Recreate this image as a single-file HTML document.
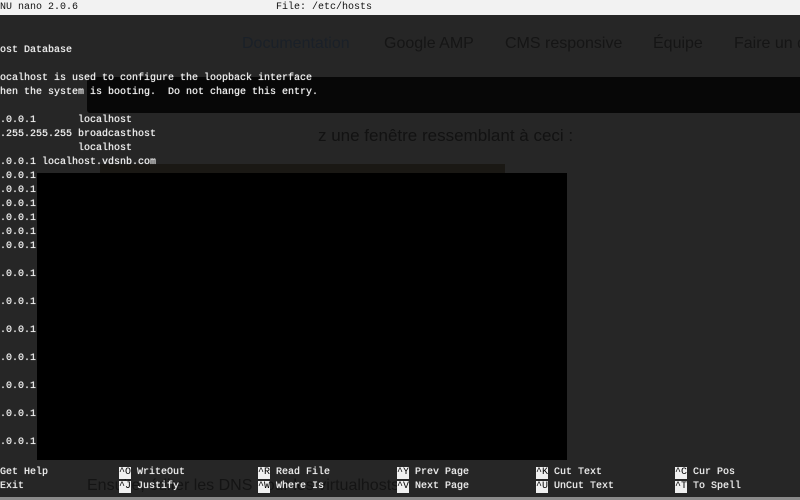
<!DOCTYPE html>
<html><head><meta charset="utf-8"><style>
html,body{margin:0;padding:0}
body{width:800px;height:500px;overflow:hidden;background:#262626;position:relative;font-family:"Liberation Mono",monospace;}
.t{position:absolute;font-size:10px;line-height:14px;color:#f0f0f0;white-space:pre;text-shadow:0 0 0.6px #fff;}
.w{position:absolute;font-family:"Liberation Sans",sans-serif;white-space:pre;}
.k{position:absolute;font-size:10px;line-height:12px;background:#f0f0f0;color:#000;white-space:pre;}
</style></head><body>
<div style="position:absolute;left:0;top:0;width:800px;height:15px;background:#f2f2f2"></div>
<div class="t" style="left:-6px;top:1px;color:#111;text-shadow:none">GNU nano 2.0.6</div>
<div class="t" style="left:276px;top:1px;color:#111;text-shadow:none">File: /etc/hosts</div>

<div class="w" style="left:242px;top:35px;font-size:16px;color:#1a2028">Documentation</div>
<div class="w" style="left:384px;top:35px;font-size:16px;color:#151515">Google AMP</div>
<div class="w" style="left:505px;top:35px;font-size:16px;color:#151515">CMS responsive</div>
<div class="w" style="left:653px;top:35px;font-size:16px;color:#151515">Équipe</div>
<div class="w" style="left:734px;top:35px;font-size:16px;color:#151515">Faire un don</div>

<div style="position:absolute;left:87px;top:77px;width:713px;height:36px;background:#070707;border-radius:3px 0 0 3px"></div>
<div class="w" style="left:318px;top:126px;font-size:17px;color:#121212">z une fenêtre ressemblant à ceci :</div>
<div style="position:absolute;left:100px;top:164px;width:405px;height:9px;background:#1a1814"></div>

<div style="position:absolute;left:37px;top:173px;width:530px;height:287px;background:#000"></div>

<div class="t" style="left:-6px;top:44px">Host Database</div>
<div class="t" style="left:-6px;top:72px">localhost is used to configure the loopback interface</div>
<div class="t" style="left:-6px;top:86px">when the system is booting.  Do not change this entry.</div>
<div class="t" style="left:-18px;top:114px">127.0.0.1       localhost</div>
<div class="t" style="left:-18px;top:128px">255.255.255.255 broadcasthost</div>
<div class="t" style="left:78px;top:142px">localhost</div>
<div class="t" style="left:-18px;top:156px">127.0.0.1 localhost.vdsnb.com</div>
<div class="t" style="left:-18px;top:170px">127.0.0.1</div>
<div class="t" style="left:-18px;top:184px">127.0.0.1</div>
<div class="t" style="left:-18px;top:198px">127.0.0.1</div>
<div class="t" style="left:-18px;top:212px">127.0.0.1</div>
<div class="t" style="left:-18px;top:226px">127.0.0.1</div>
<div class="t" style="left:-18px;top:240px">127.0.0.1</div>
<div class="t" style="left:-18px;top:268px">127.0.0.1</div>
<div class="t" style="left:-18px;top:296px">127.0.0.1</div>
<div class="t" style="left:-18px;top:324px">127.0.0.1</div>
<div class="t" style="left:-18px;top:352px">127.0.0.1</div>
<div class="t" style="left:-18px;top:380px">127.0.0.1</div>
<div class="t" style="left:-18px;top:408px">127.0.0.1</div>
<div class="t" style="left:-18px;top:436px">127.0.0.1</div>

<div class="w" style="left:87px;top:477px;font-size:16px;color:#141414">Ensuite, éditer les DNS pour les virtualhosts</div>

<div class="t" style="left:0px;top:466px">Get Help</div>
<div class="t" style="left:0px;top:480px">Exit</div>
<div class="k" style="left:119px;top:467px">^O</div><div class="t" style="left:137px;top:466px">WriteOut</div>
<div class="k" style="left:119px;top:481px">^J</div><div class="t" style="left:137px;top:480px">Justify</div>
<div class="k" style="left:258px;top:467px">^R</div><div class="t" style="left:276px;top:466px">Read File</div>
<div class="k" style="left:258px;top:481px">^W</div><div class="t" style="left:276px;top:480px">Where Is</div>
<div class="k" style="left:397px;top:467px">^Y</div><div class="t" style="left:415px;top:466px">Prev Page</div>
<div class="k" style="left:397px;top:481px">^V</div><div class="t" style="left:415px;top:480px">Next Page</div>
<div class="k" style="left:536px;top:467px">^K</div><div class="t" style="left:554px;top:466px">Cut Text</div>
<div class="k" style="left:536px;top:481px">^U</div><div class="t" style="left:554px;top:480px">UnCut Text</div>
<div class="k" style="left:675px;top:467px">^C</div><div class="t" style="left:693px;top:466px">Cur Pos</div>
<div class="k" style="left:675px;top:481px">^T</div><div class="t" style="left:693px;top:480px">To Spell</div>
<div style="position:absolute;left:0;top:497px;width:800px;height:3px;background:#8a8a8a"></div>
</body></html>
